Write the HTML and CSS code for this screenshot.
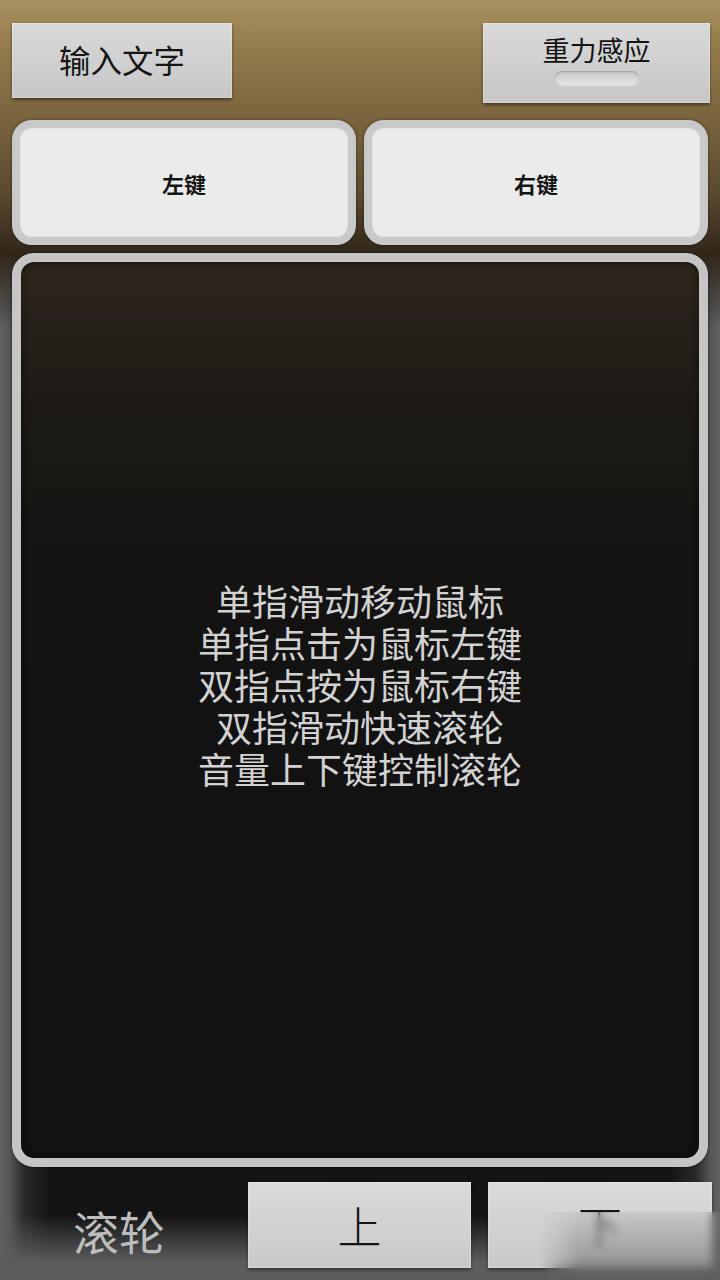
FILE: index.html
```html
<!DOCTYPE html>
<html lang="zh-CN">
<head>
<meta charset="utf-8">
<title>鼠标</title>
<link rel="stylesheet" href="styles.css">
</head>
<body>
<div class="app">
  <div class="top-row">
    <div class="btn btn-input">输入文字</div>
    <div class="btn btn-gravity">
      <span class="gravity-label">重力感应</span>
      <span class="toggle"></span>
    </div>
  </div>
  <div class="key-row">
    <div class="key"><span>左键</span></div>
    <div class="key"><span>右键</span></div>
  </div>
  <div class="pad">
    <div class="pad-text">
      <p>单指滑动移动鼠标</p>
      <p>单指点击为鼠标左键</p>
      <p>双指点按为鼠标右键</p>
      <p>双指滑动快速滚轮</p>
      <p>音量上下键控制滚轮</p>
    </div>
  </div>
  <div class="wheel-row">
    <div class="wheel-label">滚轮</div>
    <div class="btn wheel-btn wheel-up">上</div>
    <div class="btn wheel-btn wheel-down">下</div>
  </div>
</div>
<div class="smudge"></div>
</body>
</html>
```
FILE: styles.css
```css
html, body {
  margin: 0;
  padding: 0;
}
body {
  width: 720px;
  height: 1280px;
  overflow: hidden;
  position: relative;
  font-family: "Noto Sans CJK SC", "Noto Sans", sans-serif;
  background:
    linear-gradient(to bottom, #a8905f 0, #927a4b 50px, #7d6740 110px, #5c4b30 190px, #30271a 255px, rgba(30,26,20,0) 330px),
    linear-gradient(to bottom, rgba(90,90,90,0) 1215px, #5c5c5c 1262px, #5e5e5e 1280px),
    linear-gradient(to right, #626262 0, #555 10px, #2a2a2a 24px, #141414 50px, #121212 360px, #141414 670px, #2a2a2a 696px, #555 710px, #626262 720px);
}
.app {
  display: flex;
  flex-direction: column;
}
.top-row {
  display: flex;
  justify-content: space-between;
  align-items: flex-start;
  padding: 23px 10px 0 12px;
  height: 80px;
}
.btn {
  background: linear-gradient(to bottom, #d9d9d9 0, #cfcfcf 55%, #c6c6c6 100%);
  box-shadow: 0 2px 3px rgba(0,0,0,0.45), inset 0 0 0 1px rgba(255,255,255,0.25);
  color: #141414;
  display: flex;
  align-items: center;
  justify-content: center;
  box-sizing: border-box;
}
.btn-input {
  width: 220px;
  height: 75px;
  font-size: 31.5px;
  padding-bottom: 3px;
}
.btn-gravity {
  width: 227px;
  height: 80px;
  flex-direction: column;
  justify-content: flex-start;
  padding-top: 10px;
}
.gravity-label {
  font-size: 27px;
  line-height: 34px;
}
.toggle {
  display: block;
  margin-top: 4px;
  width: 84px;
  height: 14px;
  border-radius: 8px;
  background: linear-gradient(to bottom, #c8c8c8, #e4e4e4);
  box-shadow: inset 0 1px 2px rgba(0,0,0,0.25), 0 1px 0 rgba(255,255,255,0.4);
}
.key-row {
  display: flex;
  gap: 8px;
  padding: 17px 12px 0 12px;
}
.key {
  width: 344px;
  height: 125px;
  box-sizing: border-box;
  border: 8px solid #c9c9c9;
  border-radius: 20px;
  background: #ebebeb;
  box-shadow: 0 0 3px rgba(0,0,0,0.5), inset 0 0 2px rgba(0,0,0,0.12);
  display: flex;
  align-items: center;
  justify-content: center;
  font-size: 22px;
  font-weight: 700;
  color: #151515;
}
.pad {
  margin: 8px 12px 0 12px;
  height: 914px;
  box-sizing: border-box;
  border: 9px solid #c5c5c5;
  border-radius: 22px;
  background: linear-gradient(to bottom, #2e261c 0, #1d1a15 140px, #141312 320px, #121212 500px);
  box-shadow: 0 0 3px rgba(0,0,0,0.5), inset 0 0 8px rgba(0,0,0,0.6);
  display: flex;
  align-items: center;
  justify-content: center;
  padding-bottom: 52px;
}
.pad-text {
  text-align: center;
  color: #d2d2d2;
  font-size: 36px;
  line-height: 42px;
}
.pad-text p {
  margin: 0;
  height: 42px;
}
.wheel-row {
  display: flex;
  align-items: flex-start;
  padding: 15px 8px 0 12px;
}
.wheel-label {
  width: 214px;
  margin-right: 22px;
  text-align: center;
  color: #bdbdbd;
  font-size: 46px;
  line-height: 52px;
  padding-top: 22px;
}
.wheel-btn {
  height: 86px;
  font-size: 44px;
  font-weight: 300;
  background: linear-gradient(to bottom, #dadada 0, #d0d0d0 60%, #c9c9c9 100%);
}
.wheel-up {
  width: 223px;
  margin-right: 17px;
}
.wheel-down {
  width: 224px;
}
.smudge {
  position: absolute;
  left: 540px;
  top: 1212px;
  width: 180px;
  height: 68px;
  backdrop-filter: blur(5px);
  background: linear-gradient(to bottom, rgba(140,140,140,0.15) 0, rgba(110,110,110,0.45) 60%, rgba(95,95,95,0.7) 100%);
  -webkit-mask-image: linear-gradient(to right, rgba(0,0,0,0) 0, #000 40px);
  mask-image: linear-gradient(to right, rgba(0,0,0,0) 0, #000 40px);
}
```
